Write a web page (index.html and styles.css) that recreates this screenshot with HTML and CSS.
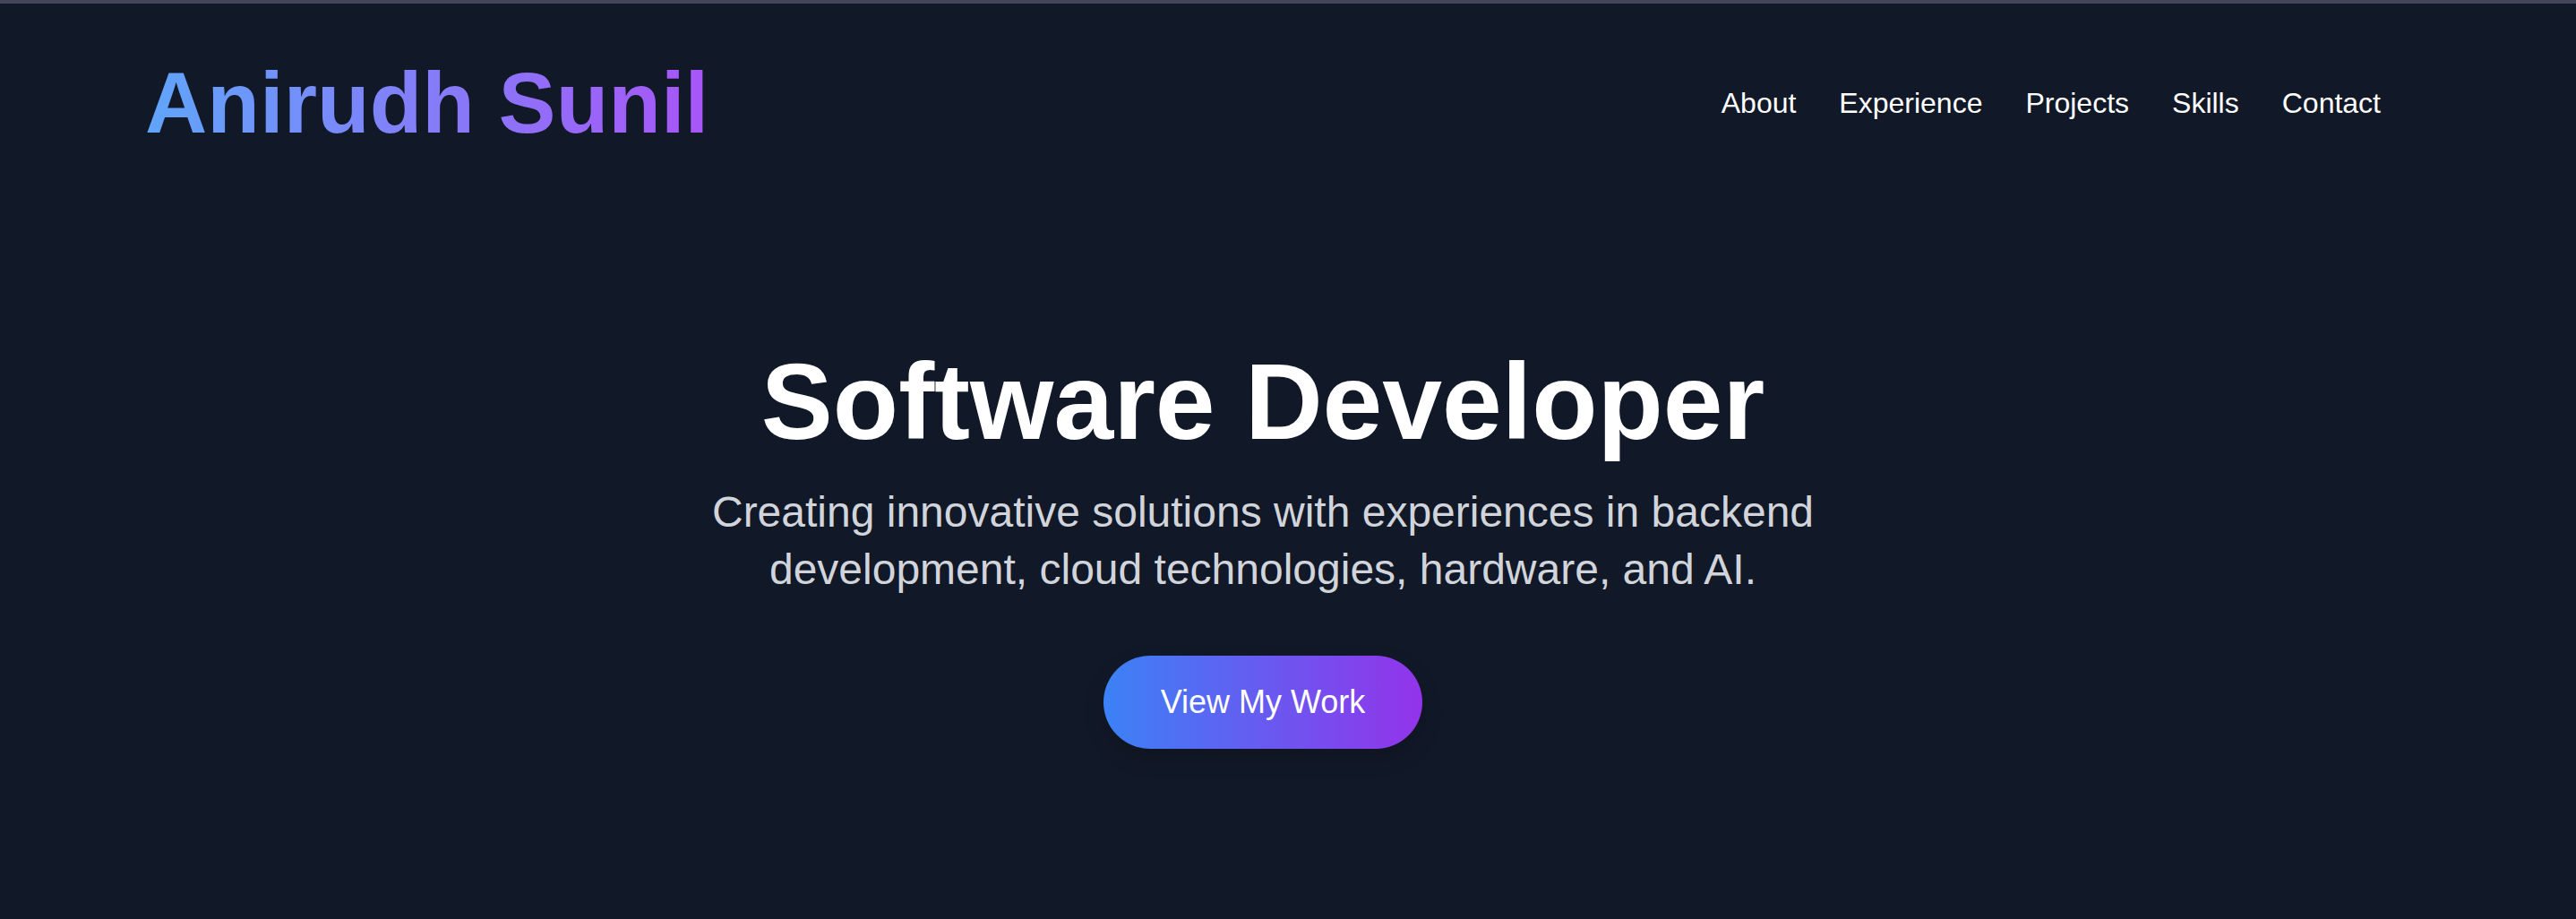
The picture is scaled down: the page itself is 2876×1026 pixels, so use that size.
FILE: index.html
```html
<!DOCTYPE html>
<html lang="en">
<head>
<meta charset="utf-8">
<title>Anirudh Sunil</title>
<link rel="stylesheet" href="styles.css">
</head>
<body>
<div class="topbar"></div>
<div class="page">
  <header class="header">
    <a class="logo" href="#">Anirudh Sunil</a>
    <nav class="nav">
      <a href="#about">About</a>
      <a href="#experience">Experience</a>
      <a href="#projects">Projects</a>
      <a href="#skills">Skills</a>
      <a href="#contact">Contact</a>
    </nav>
  </header>
  <section class="hero">
    <h1 class="hero-title">Software Developer</h1>
    <p class="hero-text">Creating innovative solutions with experiences in backend development, cloud technologies, hardware, and AI.</p>
    <a class="hero-btn" href="#projects">View My Work</a>
  </section>
</div>
</body>
</html>
```
FILE: styles.css
```css
* { box-sizing: border-box; }
html, body { margin: 0; padding: 0; }
body {
  background: #111827;
  font-family: "Liberation Sans", Arial, sans-serif;
  color: #ffffff;
  min-height: 1026px;
}
a { text-decoration: none; color: inherit; }
.topbar {
  height: 4px;
  background: #45455a;
}
.page {
  padding-right: 56px;
}
.header {
  display: flex;
  justify-content: space-between;
  align-items: center;
  padding: 55px 162px 0 162px;
}
.logo {
  font-size: 96px;
  line-height: 112px;
  font-weight: 700;
  background: linear-gradient(90deg, #60a5fa, #a855f7);
  -webkit-background-clip: text;
  background-clip: text;
  color: transparent;
}
.nav {
  display: flex;
  gap: 48px;
  font-size: 32px;
  line-height: 37px;
}
.nav a { color: #ffffff; }
.hero {
  display: flex;
  flex-direction: column;
  align-items: center;
  text-align: center;
  padding-top: 217px;
}
.hero-title {
  margin: 0;
  font-size: 120px;
  line-height: 120px;
  font-weight: 700;
  color: #ffffff;
}
.hero-text {
  margin: 32px 0 64px;
  max-width: 1300px;
  font-size: 48px;
  line-height: 64px;
  color: #d1d5db;
}
.hero-btn {
  display: inline-block;
  padding: 24px 64px;
  font-size: 36px;
  line-height: 56px;
  border-radius: 9999px;
  color: #ffffff;
  background: linear-gradient(90deg, #3b82f6, #9333ea);
  box-shadow: 0 10px 25px rgba(0, 0, 0, 0.15);
}
```
